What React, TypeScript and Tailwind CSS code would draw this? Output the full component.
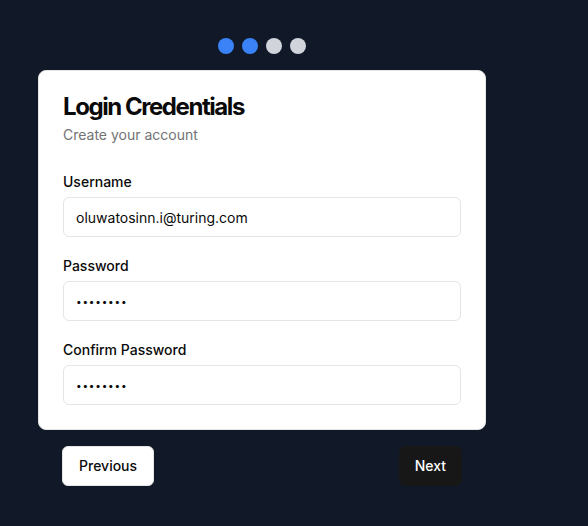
import { FC } from "react";

interface FieldProps {
  label: string;
  type: string;
  value: string;
}

const Field: FC<FieldProps> = ({ label, type, value }) => {
  const isSecret = type === "password";

  return (
    <div className="flex flex-col">
      <label className="text-sm font-medium leading-none text-[#0a0a0a]">{label}</label>
      <input
        type={type}
        defaultValue={value}
        className={`${
          isSecret ? "text-[10px] tracking-[0.8px]" : "text-sm"
        } mt-2 h-10 w-full rounded-md border border-[#e5e5e5] bg-white px-3 text-[#0a0a0a] outline-none`}
      />
    </div>
  );
};

const App: FC = () => {
  const steps = [true, true, false, false];

  return (
    <div
      className="min-h-screen bg-[#111827] pl-[38px] pt-[38px]"
      style={{ fontFamily: "Inter, 'Noto Sans', sans-serif" }}
    >
      <div className="flex w-[448px] flex-col">
        <div className="flex justify-center gap-2">
          {steps.map((active, idx) => (
            <div
              key={`step-${idx}`}
              className={`${active ? "bg-[#3b82f6]" : "bg-[#d1d5db]"} h-4 w-4 rounded-full`}
            ></div>
          ))}
        </div>

        <div className="mt-4 rounded-lg border border-[#e5e5e5] bg-white p-6">
          <h2 className="text-2xl font-bold leading-none tracking-[-0.06em] text-[#0a0a0a]">
            Login Credentials
          </h2>
          <p className="mt-1.5 text-sm text-[#737373]">Create your account</p>

          <div className="mt-[30px] flex flex-col gap-[22px]">
            <Field label="Username" type="text" value="oluwatosinn.i@turing.com" />
            <Field label="Password" type="password" value="password" />
            <Field label="Confirm Password" type="password" value="password" />
          </div>
        </div>

        <div className="mt-4 flex justify-between px-6">
          <button className="h-10 rounded-md border border-[#e5e5e5] bg-white px-4 text-sm font-medium text-[#0a0a0a]">
            Previous
          </button>
          <button className="h-10 rounded-md bg-[#171717] px-4 text-sm font-medium text-white">
            Next
          </button>
        </div>
      </div>
    </div>
  );
};

export default App;
